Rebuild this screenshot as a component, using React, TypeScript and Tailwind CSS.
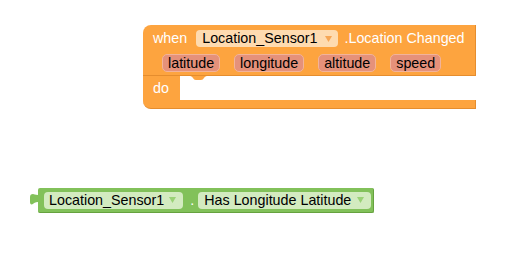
import React from "react";

const font = { fontFamily: '"Liberation Sans", Arial, sans-serif' };

function Arrow({ color }: { color: string }) {
  return (
    <svg width="7" height="6" viewBox="0 0 7 6" className="block shrink-0">
      <path d="M0 0 L7 0 L3.5 6 Z" fill={color} />
    </svg>
  );
}

function Chip({ label }: { label: string }) {
  return (
    <div className="h-[18px] px-[5px] flex items-center rounded-[5px] bg-[#e5917a] border border-[#f2b39a] text-black leading-none">
      {label}
    </div>
  );
}

export default function App() {
  return (
    <div className="relative w-[529px] h-[257px] bg-white overflow-hidden text-[14.3px]" style={font}>
      {/* Event block */}
      <div className="absolute left-[143px] top-[25px] w-[333px] flex flex-col">
        <div className="bg-[#fda43f] rounded-tl-[8px] pt-[5px] pb-[3px] border-r border-b border-[#e58d2e] leading-none">
          <div className="h-[17px] flex items-center pl-[10px]">
            <span className="text-white">when</span>
            <div className="ml-[9px] h-[17px] pl-[6px] pr-[6px] flex items-center rounded-[4px] bg-[#fedbb0] text-black">
              <span>Location_Sensor1</span>
              <span className="ml-[8px]">
                <Arrow color="#f6a655" />
              </span>
            </div>
            <span className="ml-[6px] text-white">.Location Changed</span>
          </div>
          <div className="mt-[7px] h-[18px] flex items-center pl-[19px] gap-[14px]">
            <Chip label="latitude" />
            <Chip label="longitude" />
            <Chip label="altitude" />
            <Chip label="speed" />
          </div>
        </div>
        <div className="h-[24px] flex">
          <div className="w-[37px] bg-[#fda43f] flex items-center pl-[10px] text-white leading-none">
            do
          </div>
          <div className="relative flex-1 bg-white rounded-l-[8px]">
            <svg className="absolute left-[10px] top-0" width="18" height="6" viewBox="0 0 18 6">
              <path d="M0 0 C3 0 3 4 6 4 L11 4 C14 4 14 0 17 0 Z" fill="#fda43f" />
            </svg>
          </div>
        </div>
        <div className="h-[9px] bg-[#fda43f] rounded-bl-[8px] border-r border-b border-[#e58d2e]" />
      </div>

      {/* Getter block */}
      <div className="absolute left-[30px] top-[188px] flex">
        <svg width="8" height="25" viewBox="0 0 8 25" className="block">
          <path d="M8 5 L8 7 C5 7 4 6 3 6 C1 6 0 7 0 9 L0 14 C0 16 1 17 3 16 C4 15 5 14 8 14 L8 16 Z" fill="#82c15a" />
        </svg>
        <div className="w-[336px] h-[25px] bg-[#82c15a] rounded-[2px] border-b border-r border-[#66a23f] flex items-center pl-[6px] leading-none">
          <div className="h-[17px] pl-[5px] pr-[7px] flex items-center rounded-[4px] bg-[#d3ebc0] text-black">
            <span>Location_Sensor1</span>
            <span className="ml-[5px]">
              <Arrow color="#9ad276" />
            </span>
          </div>
          <span className="ml-[7px] text-white">.</span>
          <div className="ml-[4px] h-[17px] pl-[6px] pr-[7px] flex items-center rounded-[4px] bg-[#d3ebc0] text-black">
            <span>Has Longitude Latitude</span>
            <span className="ml-[6px]">
              <Arrow color="#9ad276" />
            </span>
          </div>
        </div>
      </div>
    </div>
  );
}
